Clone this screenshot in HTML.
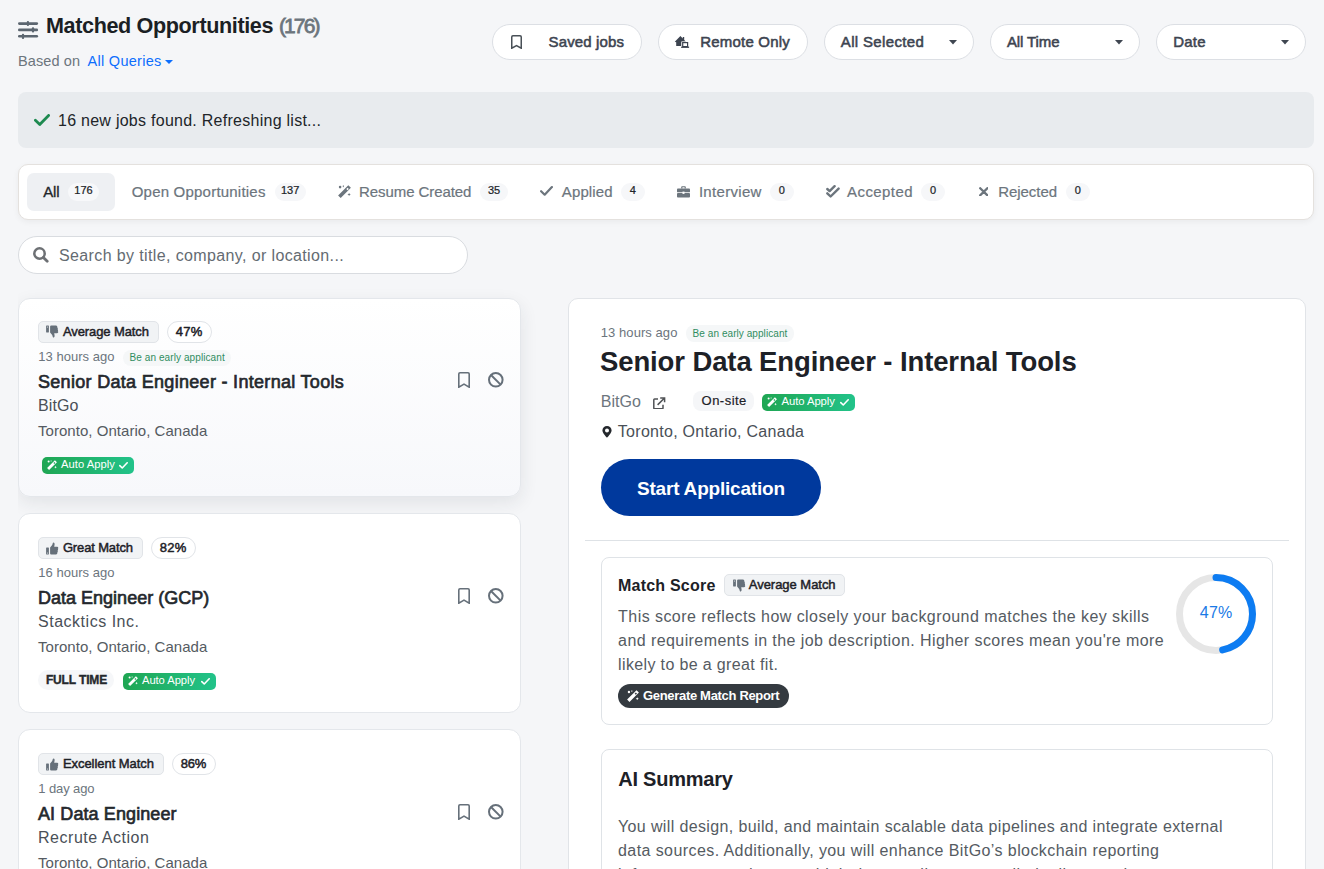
<!DOCTYPE html>
<html><head><meta charset="utf-8"><style>
html,body{margin:0;padding:0;}
body{width:1324px;height:869px;overflow:hidden;position:relative;background:#f5f6f8;font-family:"Liberation Sans", sans-serif;}
</style></head><body>
<svg style="position:absolute;left:18px;top:20px" width="21" height="20" viewBox="0 0 21 20"><g stroke="#5c6670" stroke-width="2.6" stroke-linecap="round"><line x1="1.3" y1="3.6" x2="18.8" y2="3.6"/><line x1="1.3" y1="9.9" x2="18.8" y2="9.9"/><line x1="1.3" y1="16.3" x2="18.8" y2="16.3"/></g><g fill="#5c6670"><rect x="8.8" y="0.9" width="2.2" height="5.2" rx="1"/><rect x="13.9" y="7.3" width="2.2" height="5.2" rx="1"/><rect x="3.9" y="13.7" width="2.2" height="5.2" rx="1"/></g></svg>
<div style="position:absolute;left:492px;top:24px;width:150px;height:36px;box-sizing:border-box;background:#fff;border:1px solid #dcdfe4;border-radius:18px;"></div>
<div style="position:absolute;left:658px;top:24px;width:150px;height:36px;box-sizing:border-box;background:#fff;border:1px solid #dcdfe4;border-radius:18px;"></div>
<div style="position:absolute;left:824px;top:24px;width:150px;height:36px;box-sizing:border-box;background:#fff;border:1px solid #dcdfe4;border-radius:18px;"></div>
<div style="position:absolute;left:990px;top:24px;width:150px;height:36px;box-sizing:border-box;background:#fff;border:1px solid #dcdfe4;border-radius:18px;"></div>
<div style="position:absolute;left:1156px;top:24px;width:150px;height:36px;box-sizing:border-box;background:#fff;border:1px solid #dcdfe4;border-radius:18px;"></div>
<div style="position:absolute;left:18px;top:92px;width:1296px;height:56px;box-sizing:border-box;background:#e8ebee;border-radius:8px;"></div>
<div style="position:absolute;left:18px;top:164px;width:1296px;height:56px;box-sizing:border-box;background:#fff;border:1px solid #e4e1de;border-radius:10px;box-shadow:0 2px 6px rgba(0,0,0,0.05);"></div>
<div style="position:absolute;left:27px;top:173px;width:88px;height:38px;box-sizing:border-box;background:#eef0f3;border-radius:7px;"></div>
<div style="position:absolute;left:68px;top:183px;width:31px;height:18px;box-sizing:border-box;background:#f7f8fa;border-radius:9px;"></div>
<div style="position:absolute;left:274.5px;top:183px;width:31.19999999999999px;height:18px;box-sizing:border-box;background:#f6f7f9;border-radius:9px;"></div>
<div style="position:absolute;left:480.4px;top:183px;width:27.400000000000034px;height:18px;box-sizing:border-box;background:#f6f7f9;border-radius:9px;"></div>
<div style="position:absolute;left:621px;top:183px;width:23.700000000000045px;height:18px;box-sizing:border-box;background:#f6f7f9;border-radius:9px;"></div>
<div style="position:absolute;left:769.7px;top:183px;width:24.299999999999955px;height:18px;box-sizing:border-box;background:#f6f7f9;border-radius:9px;"></div>
<div style="position:absolute;left:921px;top:183px;width:24px;height:18px;box-sizing:border-box;background:#f6f7f9;border-radius:9px;"></div>
<div style="position:absolute;left:1066px;top:183px;width:23.700000000000045px;height:18px;box-sizing:border-box;background:#f6f7f9;border-radius:9px;"></div>
<div style="position:absolute;left:18px;top:236px;width:450px;height:38px;box-sizing:border-box;background:#fff;border:1px solid #d9dce0;border-radius:19px;"></div>
<div style="position:absolute;left:18px;top:280px;width:560px;height:600px;overflow:hidden;"><div style="position:absolute;left:0;top:18px;width:503px;height:199px;border-radius:12px;box-shadow:0 6px 18px rgba(30,40,60,0.09);"></div></div>
<div style="position:absolute;left:18px;top:298px;width:503px;height:199px;box-sizing:border-box;border:1px solid #e4e7eb;border-radius:12px;background:linear-gradient(180deg,#ffffff 0%,#f7f8fb 100%);"></div>
<div style="position:absolute;left:38px;top:321px;width:121px;height:22px;box-sizing:border-box;background:#f1f3f5;border:1px solid #e1e4e8;border-radius:5px;"></div>
<div style="position:absolute;left:167px;top:321px;width:45px;height:22px;box-sizing:border-box;background:#fff;border:1px solid #e1e4e8;border-radius:11px;"></div>
<div style="position:absolute;left:123px;top:350px;width:108px;height:16px;box-sizing:border-box;background:#f5f7f8;border-radius:8px;"></div>
<div style="position:absolute;left:42px;top:457px;width:92px;height:17px;box-sizing:border-box;background:linear-gradient(90deg,#1fa653,#22c38a);border-radius:5px;"></div>
<div style="position:absolute;left:18px;top:513px;width:503px;height:200px;box-sizing:border-box;border:1px solid #e4e7eb;border-radius:12px;background:#fff;"></div>
<div style="position:absolute;left:38px;top:537px;width:105px;height:22px;box-sizing:border-box;background:#f1f3f5;border:1px solid #e1e4e8;border-radius:5px;"></div>
<div style="position:absolute;left:151px;top:537px;width:45px;height:22px;box-sizing:border-box;background:#fff;border:1px solid #e1e4e8;border-radius:11px;"></div>
<div style="position:absolute;left:38px;top:670px;width:76px;height:20px;box-sizing:border-box;background:#f6f7f9;border-radius:10px;"></div>
<div style="position:absolute;left:123px;top:673px;width:93px;height:17px;box-sizing:border-box;background:linear-gradient(90deg,#1fa653,#22c38a);border-radius:5px;"></div>
<div style="position:absolute;left:18px;top:729px;width:503px;height:211px;box-sizing:border-box;border:1px solid #e4e7eb;border-radius:12px;background:#fff;"></div>
<div style="position:absolute;left:38px;top:753px;width:126px;height:22px;box-sizing:border-box;background:#f1f3f5;border:1px solid #e1e4e8;border-radius:5px;"></div>
<div style="position:absolute;left:172px;top:753px;width:44px;height:22px;box-sizing:border-box;background:#fff;border:1px solid #e1e4e8;border-radius:11px;"></div>
<div style="position:absolute;left:568px;top:298px;width:738px;height:642px;box-sizing:border-box;background:#fff;border:1px solid #e1e4e8;border-radius:10px;"></div>
<div style="position:absolute;left:686px;top:325px;width:107.5px;height:17px;box-sizing:border-box;background:#f5f7f8;border-radius:8px;"></div>
<div style="position:absolute;left:693px;top:391px;width:61px;height:20px;box-sizing:border-box;background:#f5f6f8;border-radius:8px;"></div>
<div style="position:absolute;left:762px;top:394px;width:93px;height:17px;box-sizing:border-box;background:linear-gradient(90deg,#1fa653,#22c38a);border-radius:5px;"></div>
<div style="position:absolute;left:601px;top:459px;width:220px;height:57px;box-sizing:border-box;background:#00399d;border-radius:28.5px;"></div>
<div style="position:absolute;left:585px;top:540px;width:704px;height:1px;box-sizing:border-box;background:#dee2e6;"></div>
<div style="position:absolute;left:601px;top:557px;width:672px;height:168px;box-sizing:border-box;background:#fff;border:1px solid #dfe3e7;border-radius:8px;"></div>
<div style="position:absolute;left:724px;top:574px;width:121px;height:22px;box-sizing:border-box;background:#f1f3f5;border:1px solid #e1e4e8;border-radius:5px;"></div>
<div style="position:absolute;left:618px;top:684px;width:171px;height:24px;box-sizing:border-box;background:#343a40;border-radius:12px;"></div>
<div style="position:absolute;left:601px;top:749px;width:672px;height:211px;box-sizing:border-box;background:#fff;border:1px solid #dfe3e7;border-radius:8px;"></div>
<div style="position:absolute;left:46px;top:15.02px;font-size:21.6px;line-height:1;font-weight:700;color:#1b1f24;letter-spacing:-0.382px;white-space:nowrap;">Matched Opportunities</div>
<div style="position:absolute;left:279px;top:15.22px;font-size:21px;line-height:1;font-weight:400;color:#6c757d;letter-spacing:-1.908px;white-space:nowrap;-webkit-text-stroke:0.76px #6c757d;">(176)</div>
<div style="position:absolute;left:18px;top:53.73px;font-size:14.5px;line-height:1;font-weight:400;color:#6c757d;letter-spacing:0.103px;white-space:nowrap;">Based on</div>
<div style="position:absolute;left:87.6px;top:53.73px;font-size:14.5px;line-height:1;font-weight:400;color:#0d6efd;letter-spacing:0.278px;white-space:nowrap;">All Queries</div>
<div style="position:absolute;left:548.6px;top:34.30px;font-size:15px;line-height:1;font-weight:400;color:#3d4450;letter-spacing:0.132px;white-space:nowrap;-webkit-text-stroke:0.54px #3d4450;">Saved jobs</div>
<div style="position:absolute;left:700.3px;top:34.30px;font-size:15px;line-height:1;font-weight:400;color:#3d4450;letter-spacing:0.186px;white-space:nowrap;-webkit-text-stroke:0.54px #3d4450;">Remote Only</div>
<div style="position:absolute;left:840.8px;top:34.30px;font-size:15px;line-height:1;font-weight:400;color:#3d4450;letter-spacing:0.344px;white-space:nowrap;-webkit-text-stroke:0.54px #3d4450;">All Selected</div>
<div style="position:absolute;left:1006.9px;top:34.30px;font-size:15px;line-height:1;font-weight:400;color:#3d4450;letter-spacing:-0.091px;white-space:nowrap;-webkit-text-stroke:0.54px #3d4450;">All Time</div>
<div style="position:absolute;left:1173.2px;top:34.30px;font-size:15px;line-height:1;font-weight:400;color:#3d4450;letter-spacing:0.242px;white-space:nowrap;-webkit-text-stroke:0.54px #3d4450;">Date</div>
<div style="position:absolute;left:58px;top:113.06px;font-size:16px;line-height:1;font-weight:400;color:#212529;letter-spacing:0.264px;white-space:nowrap;">16 new jobs found. Refreshing list...</div>
<div style="position:absolute;left:43.3px;top:184.30px;font-size:15px;line-height:1;font-weight:400;color:#212529;letter-spacing:-0.184px;white-space:nowrap;-webkit-text-stroke:0.33px #212529;">All</div>
<div style="position:absolute;left:68px;top:185.29px;font-size:11px;line-height:1;font-weight:400;color:#212529;letter-spacing:0.000px;white-space:nowrap;-webkit-text-stroke:0.24px #212529;width:31px;text-align:center;">176</div>
<div style="position:absolute;left:131.7px;top:184.30px;font-size:15px;line-height:1;font-weight:400;color:#6c757d;letter-spacing:0.214px;white-space:nowrap;-webkit-text-stroke:0.21px #6c757d;">Open Opportunities</div>
<div style="position:absolute;left:274.5px;top:185.29px;font-size:11px;line-height:1;font-weight:400;color:#212529;letter-spacing:0.000px;white-space:nowrap;-webkit-text-stroke:0.24px #212529;width:31.19999999999999px;text-align:center;">137</div>
<div style="position:absolute;left:359px;top:184.30px;font-size:15px;line-height:1;font-weight:400;color:#6c757d;letter-spacing:-0.076px;white-space:nowrap;-webkit-text-stroke:0.21px #6c757d;">Resume Created</div>
<div style="position:absolute;left:480.4px;top:185.29px;font-size:11px;line-height:1;font-weight:400;color:#212529;letter-spacing:0.000px;white-space:nowrap;-webkit-text-stroke:0.24px #212529;width:27.400000000000034px;text-align:center;">35</div>
<div style="position:absolute;left:561.8px;top:184.30px;font-size:15px;line-height:1;font-weight:400;color:#6c757d;letter-spacing:0.126px;white-space:nowrap;-webkit-text-stroke:0.21px #6c757d;">Applied</div>
<div style="position:absolute;left:621px;top:185.29px;font-size:11px;line-height:1;font-weight:400;color:#212529;letter-spacing:0.000px;white-space:nowrap;-webkit-text-stroke:0.24px #212529;width:23.700000000000045px;text-align:center;">4</div>
<div style="position:absolute;left:698.9px;top:184.30px;font-size:15px;line-height:1;font-weight:400;color:#6c757d;letter-spacing:0.310px;white-space:nowrap;-webkit-text-stroke:0.21px #6c757d;">Interview</div>
<div style="position:absolute;left:769.7px;top:185.29px;font-size:11px;line-height:1;font-weight:400;color:#212529;letter-spacing:0.000px;white-space:nowrap;-webkit-text-stroke:0.24px #212529;width:24.299999999999955px;text-align:center;">0</div>
<div style="position:absolute;left:847px;top:184.30px;font-size:15px;line-height:1;font-weight:400;color:#6c757d;letter-spacing:0.436px;white-space:nowrap;-webkit-text-stroke:0.21px #6c757d;">Accepted</div>
<div style="position:absolute;left:921px;top:185.29px;font-size:11px;line-height:1;font-weight:400;color:#212529;letter-spacing:0.000px;white-space:nowrap;-webkit-text-stroke:0.24px #212529;width:24px;text-align:center;">0</div>
<div style="position:absolute;left:998.3px;top:184.30px;font-size:15px;line-height:1;font-weight:400;color:#6c757d;letter-spacing:-0.071px;white-space:nowrap;-webkit-text-stroke:0.21px #6c757d;">Rejected</div>
<div style="position:absolute;left:1066px;top:185.29px;font-size:11px;line-height:1;font-weight:400;color:#212529;letter-spacing:0.000px;white-space:nowrap;-webkit-text-stroke:0.24px #212529;width:23.700000000000045px;text-align:center;">0</div>
<div style="position:absolute;left:59px;top:247.66px;font-size:16px;line-height:1;font-weight:400;color:#646b72;letter-spacing:0.375px;white-space:nowrap;">Search by title, company, or location...</div>
<div style="position:absolute;left:62.9px;top:325.00px;font-size:13px;line-height:1;font-weight:400;color:#1d2127;letter-spacing:-0.091px;white-space:nowrap;-webkit-text-stroke:0.47px #1d2127;">Average Match</div>
<div style="position:absolute;left:175.8px;top:325.00px;font-size:13px;line-height:1;font-weight:400;color:#1d2127;letter-spacing:0.236px;white-space:nowrap;-webkit-text-stroke:0.47px #1d2127;">47%</div>
<div style="position:absolute;left:38.3px;top:350.00px;font-size:13px;line-height:1;font-weight:400;color:#6c757d;letter-spacing:0.018px;white-space:nowrap;">13 hours ago</div>
<div style="position:absolute;left:129.5px;top:352.54px;font-size:10px;line-height:1;font-weight:400;color:#2f8d60;letter-spacing:0.090px;white-space:nowrap;">Be an early applicant</div>
<div style="position:absolute;left:38px;top:373.26px;font-size:18px;line-height:1;font-weight:400;color:#24282d;letter-spacing:0.304px;white-space:nowrap;-webkit-text-stroke:0.65px #24282d;">Senior Data Engineer - Internal Tools</div>
<div style="position:absolute;left:38px;top:397.96px;font-size:16px;line-height:1;font-weight:400;color:#4a5057;letter-spacing:0.096px;white-space:nowrap;">BitGo</div>
<div style="position:absolute;left:38px;top:423.30px;font-size:15px;line-height:1;font-weight:400;color:#555b62;letter-spacing:0.038px;white-space:nowrap;">Toronto, Ontario, Canada</div>
<div style="position:absolute;left:61px;top:459.05px;font-size:11.2px;line-height:1;font-weight:400;color:#ffffff;letter-spacing:0.033px;white-space:nowrap;">Auto Apply</div>
<div style="position:absolute;left:62.9px;top:541.00px;font-size:13px;line-height:1;font-weight:400;color:#1d2127;letter-spacing:-0.142px;white-space:nowrap;-webkit-text-stroke:0.47px #1d2127;">Great Match</div>
<div style="position:absolute;left:159.8px;top:541.00px;font-size:13px;line-height:1;font-weight:400;color:#1d2127;letter-spacing:0.236px;white-space:nowrap;-webkit-text-stroke:0.47px #1d2127;">82%</div>
<div style="position:absolute;left:38.3px;top:566.00px;font-size:13px;line-height:1;font-weight:400;color:#6c757d;letter-spacing:0.018px;white-space:nowrap;">16 hours ago</div>
<div style="position:absolute;left:38px;top:589.26px;font-size:18px;line-height:1;font-weight:400;color:#24282d;letter-spacing:0.007px;white-space:nowrap;-webkit-text-stroke:0.65px #24282d;">Data Engineer (GCP)</div>
<div style="position:absolute;left:38px;top:613.96px;font-size:16px;line-height:1;font-weight:400;color:#4a5057;letter-spacing:0.519px;white-space:nowrap;">Stacktics Inc.</div>
<div style="position:absolute;left:38px;top:639.30px;font-size:15px;line-height:1;font-weight:400;color:#555b62;letter-spacing:0.038px;white-space:nowrap;">Toronto, Ontario, Canada</div>
<div style="position:absolute;left:45.9px;top:674.14px;font-size:12px;line-height:1;font-weight:700;color:#24282d;letter-spacing:-0.141px;white-space:nowrap;-webkit-text-stroke:0.36px #24282d;">FULL TIME</div>
<div style="position:absolute;left:142px;top:675.05px;font-size:11.2px;line-height:1;font-weight:400;color:#ffffff;letter-spacing:-0.056px;white-space:nowrap;">Auto Apply</div>
<div style="position:absolute;left:62.9px;top:757.00px;font-size:13px;line-height:1;font-weight:400;color:#1d2127;letter-spacing:-0.047px;white-space:nowrap;-webkit-text-stroke:0.47px #1d2127;">Excellent Match</div>
<div style="position:absolute;left:180.8px;top:757.00px;font-size:13px;line-height:1;font-weight:400;color:#1d2127;letter-spacing:-0.264px;white-space:nowrap;-webkit-text-stroke:0.47px #1d2127;">86%</div>
<div style="position:absolute;left:38.3px;top:782.00px;font-size:13px;line-height:1;font-weight:400;color:#6c757d;letter-spacing:-0.101px;white-space:nowrap;">1 day ago</div>
<div style="position:absolute;left:38px;top:805.26px;font-size:18px;line-height:1;font-weight:400;color:#24282d;letter-spacing:0.100px;white-space:nowrap;-webkit-text-stroke:0.65px #24282d;">AI Data Engineer</div>
<div style="position:absolute;left:38px;top:829.96px;font-size:16px;line-height:1;font-weight:400;color:#4a5057;letter-spacing:0.526px;white-space:nowrap;">Recrute Action</div>
<div style="position:absolute;left:38px;top:855.30px;font-size:15px;line-height:1;font-weight:400;color:#555b62;letter-spacing:0.038px;white-space:nowrap;">Toronto, Ontario, Canada</div>
<div style="position:absolute;left:600.8px;top:326.10px;font-size:13px;line-height:1;font-weight:400;color:#6c757d;letter-spacing:0.063px;white-space:nowrap;">13 hours ago</div>
<div style="position:absolute;left:692.6px;top:328.94px;font-size:10px;line-height:1;font-weight:400;color:#2f8d60;letter-spacing:0.065px;white-space:nowrap;">Be an early applicant</div>
<div style="position:absolute;left:600px;top:348.42px;font-size:27.5px;line-height:1;font-weight:700;color:#1d2127;letter-spacing:-0.115px;white-space:nowrap;">Senior Data Engineer - Internal Tools</div>
<div style="position:absolute;left:600.8px;top:394.16px;font-size:16px;line-height:1;font-weight:400;color:#6c757d;letter-spacing:0.022px;white-space:nowrap;">BitGo</div>
<div style="position:absolute;left:701.6px;top:394.10px;font-size:13px;line-height:1;font-weight:400;color:#1d2127;letter-spacing:0.467px;white-space:nowrap;-webkit-text-stroke:0.18px #1d2127;">On-site</div>
<div style="position:absolute;left:781.6px;top:396.00px;font-size:11.3px;line-height:1;font-weight:400;color:#ffffff;letter-spacing:-0.079px;white-space:nowrap;">Auto Apply</div>
<div style="position:absolute;left:617.8px;top:424.26px;font-size:16px;line-height:1;font-weight:400;color:#4a5057;letter-spacing:0.284px;white-space:nowrap;">Toronto, Ontario, Canada</div>
<div style="position:absolute;left:637px;top:479.22px;font-size:19px;line-height:1;font-weight:700;color:#ffffff;letter-spacing:-0.207px;white-space:nowrap;">Start Application</div>
<div style="position:absolute;left:618px;top:577.96px;font-size:16px;line-height:1;font-weight:700;color:#1d2127;letter-spacing:0.216px;white-space:nowrap;">Match Score</div>
<div style="position:absolute;left:748.8px;top:578.00px;font-size:13px;line-height:1;font-weight:400;color:#1d2127;letter-spacing:-0.033px;white-space:nowrap;-webkit-text-stroke:0.47px #1d2127;">Average Match</div>
<div style="position:absolute;left:618.1px;top:609.16px;font-size:16px;line-height:1;font-weight:400;color:#555b62;letter-spacing:0.438px;white-space:nowrap;">This score reflects how closely your background matches the key skills</div>
<div style="position:absolute;left:618.1px;top:632.96px;font-size:16px;line-height:1;font-weight:400;color:#555b62;letter-spacing:0.421px;white-space:nowrap;">and requirements in the job description. Higher scores mean you&#39;re more</div>
<div style="position:absolute;left:618.1px;top:656.76px;font-size:16px;line-height:1;font-weight:400;color:#555b62;letter-spacing:0.359px;white-space:nowrap;">likely to be a great fit.</div>
<div style="position:absolute;left:643px;top:689.40px;font-size:13px;line-height:1;font-weight:700;color:#ffffff;letter-spacing:-0.317px;white-space:nowrap;">Generate Match Report</div>
<div style="position:absolute;left:1199.7px;top:604.66px;font-size:16px;line-height:1;font-weight:400;color:#1a7ae6;letter-spacing:0.291px;white-space:nowrap;">47%</div>
<div style="position:absolute;left:618.3px;top:769.07px;font-size:20px;line-height:1;font-weight:700;color:#1d2127;letter-spacing:-0.246px;white-space:nowrap;">AI Summary</div>
<div style="position:absolute;left:618px;top:819.26px;font-size:16px;line-height:1;font-weight:400;color:#555b62;letter-spacing:0.371px;white-space:nowrap;">You will design, build, and maintain scalable data pipelines and integrate external</div>
<div style="position:absolute;left:618px;top:843.06px;font-size:16px;line-height:1;font-weight:400;color:#555b62;letter-spacing:0.419px;white-space:nowrap;">data sources. Additionally, you will enhance BitGo&#8217;s blockchain reporting</div>
<div style="position:absolute;left:618px;top:867.06px;font-size:16px;line-height:1;font-weight:400;color:#555b62;letter-spacing:0.590px;white-space:nowrap;">infrastructure and ensure high data quality across all pipelines and systems.</div>
<svg style="position:absolute;left:165px;top:59.5px;" width="8" height="4" viewBox="0 0 8 4"><path d="M0 0 H8 L4.0 4 Z" fill="#0d6efd"/></svg>
<svg style="position:absolute;left:511px;top:35px;" width="11" height="14" viewBox="0 0 11 14"><path d="M0.75 13.25 V1.95 Q0.75 0.75 1.95 0.75 H9.05 Q10.25 0.75 10.25 1.95 V13.25 L5.5 10.64 Z" fill="none" stroke="#495057" stroke-width="1.5" stroke-linejoin="miter"/></svg>
<svg style="position:absolute;left:674px;top:35px;" width="16" height="14" viewBox="0 0 16 14"><path d="M0.8 6.8 L6.4 1.1 L8.8 3.5 V2.0 H10.2 V4.9 L11.8 6.5 L11.1 7.2 H7.6 V10.9 H2.2 V7.2 Z" fill="#3d4450"/><rect x="7.4" y="6.4" width="7.4" height="6.0" fill="#fff"/><rect x="8.7" y="7.6" width="4.9" height="4.0" fill="none" stroke="#3d4450" stroke-width="1.2"/><rect x="7.1" y="11.6" width="8" height="1.3" fill="#3d4450"/></svg>
<svg style="position:absolute;left:949px;top:40px;" width="8" height="4.5" viewBox="0 0 8 4.5"><path d="M0 0 H8 L4.0 4.5 Z" fill="#3f4651"/></svg>
<svg style="position:absolute;left:1115px;top:40px;" width="8" height="4.5" viewBox="0 0 8 4.5"><path d="M0 0 H8 L4.0 4.5 Z" fill="#3f4651"/></svg>
<svg style="position:absolute;left:1281px;top:40px;" width="8" height="4.5" viewBox="0 0 8 4.5"><path d="M0 0 H8 L4.0 4.5 Z" fill="#3f4651"/></svg>
<svg style="position:absolute;left:34px;top:114px;" width="16" height="12" viewBox="0 0 16 12"><path d="M1.4 6.24 L5.76 10.4 L14.6 1.4" fill="none" stroke="#1e8a50" stroke-width="2.8" stroke-linecap="round" stroke-linejoin="round"/></svg>
<svg style="position:absolute;left:338px;top:185px;" width="13" height="13" viewBox="0 0 13 13"><g transform="scale(1.0000)" fill="#6c757d"><path fill-rule="evenodd" d="M0.1 10.4 L10.3 0.2 L12.9 2.8 L2.7 13.0 Z M8.3 4.0 L9.6 2.7 L10.8 3.9 L9.5 5.2 Z"/><circle cx="2.1" cy="2.1" r="1.3"/><ellipse cx="5.3" cy="1.2" rx="0.55" ry="0.95"/><path d="M11.1 7.9 L11.7 8.9 L12.8 9.4 L11.7 9.9 L11.1 10.9 L10.5 9.9 L9.4 9.4 L10.5 8.9 Z"/></g></svg>
<svg style="position:absolute;left:540px;top:186px;" width="13" height="10" viewBox="0 0 13 10"><path d="M1.1 5.2 L4.68 8.700000000000001 L11.9 1.1" fill="none" stroke="#6c757d" stroke-width="2.2" stroke-linecap="round" stroke-linejoin="round"/></svg>
<svg style="position:absolute;left:677px;top:186px;" width="13" height="11.5" viewBox="0 0 13 11.5"><path d="M4.2 2.4 V1.1 Q4.2 0.2 5.1 0.2 H7.9 Q8.8 0.2 8.8 1.1 V2.4 H7.6 V1.3 H5.4 V2.4 Z" fill="#6c757d"/><rect x="0" y="2.4" width="13" height="3.9" rx="0.9" fill="#6c757d"/><rect x="0" y="7.1" width="13" height="4.4" rx="0.9" fill="#6c757d"/><rect x="5.5" y="5.6" width="2" height="2.3" fill="#fff"/></svg>
<svg style="position:absolute;left:825.5px;top:185px;" width="14" height="13" viewBox="0 0 14 13"><path d="M1.3 4.0 L3.6 6.1 L8.6 1.2" fill="none" stroke="#6c757d" stroke-width="2.4" stroke-linecap="round" stroke-linejoin="round"/><path d="M1.3 8.3 L4.6 11.5 L12.6 3.6" fill="none" stroke="#6c757d" stroke-width="2.4" stroke-linecap="round" stroke-linejoin="round"/></svg>
<svg style="position:absolute;left:978.8px;top:186.8px;" width="9.5" height="9.5" viewBox="0 0 9.5 9.5"><path d="M1.2 1.2 L8.3 8.3 M8.3 1.2 L1.2 8.3" stroke="#6c757d" stroke-width="2.3" stroke-linecap="round"/></svg>
<svg style="position:absolute;left:33px;top:246.8px;" width="16" height="16" viewBox="0 0 16 16"><circle cx="6.5" cy="6.5" r="5.2" fill="none" stroke="#6d7074" stroke-width="2.5"/><line x1="10.4" y1="10.4" x2="14.2" y2="14.2" stroke="#6d7074" stroke-width="2.8" stroke-linecap="round"/></svg>
<svg style="position:absolute;left:46px;top:325.0px;" width="13" height="13" viewBox="0 0 13 13"><g transform="translate(0,13) scale(1,-1)"><rect x="0.1" y="5.5" width="2.8" height="6.9" rx="0.4" fill="#66707a"/><circle cx="1.5" cy="11.0" r="0.5" fill="#f1f3f5"/><path d="M4.1 5.4 L6.0 3.3 Q6.6 2.3 6.8 1.1 Q7.1 0.3 7.8 0.4 Q8.8 0.8 8.6 2.4 L8.2 4.8 H11.1 Q12.3 4.8 12.3 5.9 Q12.3 6.5 11.8 6.8 Q12.3 7.3 12.0 8.1 Q11.9 8.5 11.6 8.7 Q12.0 9.3 11.7 10.0 Q11.5 10.3 11.3 10.4 Q11.5 11.2 11.1 11.8 Q10.8 12.4 10.0 12.4 H5.2 Q4.1 12.4 4.1 11.4 Z" fill="#66707a"/></g></svg>
<svg style="position:absolute;left:47px;top:459.7px;" width="10" height="10" viewBox="0 0 10 10"><g transform="scale(0.7692)" fill="#fff"><path fill-rule="evenodd" d="M0.1 10.4 L10.3 0.2 L12.9 2.8 L2.7 13.0 Z M8.3 4.0 L9.6 2.7 L10.8 3.9 L9.5 5.2 Z"/><circle cx="2.1" cy="2.1" r="1.3"/><ellipse cx="5.3" cy="1.2" rx="0.55" ry="0.95"/><path d="M11.1 7.9 L11.7 8.9 L12.8 9.4 L11.7 9.9 L11.1 10.9 L10.5 9.9 L9.4 9.4 L10.5 8.9 Z"/></g></svg>
<svg style="position:absolute;left:119px;top:462.0px;" width="9" height="7" viewBox="0 0 9 7"><path d="M0.8 3.64 L3.2399999999999998 6.0 L8.2 0.8" fill="none" stroke="#fff" stroke-width="1.6" stroke-linecap="round" stroke-linejoin="round"/></svg>
<svg style="position:absolute;left:458px;top:372px;" width="12" height="16" viewBox="0 0 12 16"><path d="M0.8 15.2 V2.0 Q0.8 0.8 2.0 0.8 H10.0 Q11.2 0.8 11.2 2.0 V15.2 L6.0 12.16 Z" fill="none" stroke="#66707a" stroke-width="1.6" stroke-linejoin="miter"/></svg>
<svg style="position:absolute;left:488.2px;top:372.2px;" width="15.6" height="15.6" viewBox="0 0 15.6 15.6"><circle cx="7.8" cy="7.8" r="6.8" fill="none" stroke="#66707a" stroke-width="2.0"/><line x1="2.99172" y1="2.99172" x2="12.60828" y2="12.60828" stroke="#66707a" stroke-width="2.0"/></svg>
<svg style="position:absolute;left:46px;top:541.5px;" width="13" height="13" viewBox="0 0 13 13"><g><rect x="0.1" y="5.5" width="2.8" height="6.9" rx="0.4" fill="#66707a"/><circle cx="1.5" cy="11.0" r="0.5" fill="#f1f3f5"/><path d="M4.1 5.4 L6.0 3.3 Q6.6 2.3 6.8 1.1 Q7.1 0.3 7.8 0.4 Q8.8 0.8 8.6 2.4 L8.2 4.8 H11.1 Q12.3 4.8 12.3 5.9 Q12.3 6.5 11.8 6.8 Q12.3 7.3 12.0 8.1 Q11.9 8.5 11.6 8.7 Q12.0 9.3 11.7 10.0 Q11.5 10.3 11.3 10.4 Q11.5 11.2 11.1 11.8 Q10.8 12.4 10.0 12.4 H5.2 Q4.1 12.4 4.1 11.4 Z" fill="#66707a"/></g></svg>
<svg style="position:absolute;left:128px;top:675.7px;" width="10" height="10" viewBox="0 0 10 10"><g transform="scale(0.7692)" fill="#fff"><path fill-rule="evenodd" d="M0.1 10.4 L10.3 0.2 L12.9 2.8 L2.7 13.0 Z M8.3 4.0 L9.6 2.7 L10.8 3.9 L9.5 5.2 Z"/><circle cx="2.1" cy="2.1" r="1.3"/><ellipse cx="5.3" cy="1.2" rx="0.55" ry="0.95"/><path d="M11.1 7.9 L11.7 8.9 L12.8 9.4 L11.7 9.9 L11.1 10.9 L10.5 9.9 L9.4 9.4 L10.5 8.9 Z"/></g></svg>
<svg style="position:absolute;left:201px;top:678.0px;" width="9" height="7" viewBox="0 0 9 7"><path d="M0.8 3.64 L3.2399999999999998 6.0 L8.2 0.8" fill="none" stroke="#fff" stroke-width="1.6" stroke-linecap="round" stroke-linejoin="round"/></svg>
<svg style="position:absolute;left:458px;top:588px;" width="12" height="16" viewBox="0 0 12 16"><path d="M0.8 15.2 V2.0 Q0.8 0.8 2.0 0.8 H10.0 Q11.2 0.8 11.2 2.0 V15.2 L6.0 12.16 Z" fill="none" stroke="#66707a" stroke-width="1.6" stroke-linejoin="miter"/></svg>
<svg style="position:absolute;left:488.2px;top:588.2px;" width="15.6" height="15.6" viewBox="0 0 15.6 15.6"><circle cx="7.8" cy="7.8" r="6.8" fill="none" stroke="#66707a" stroke-width="2.0"/><line x1="2.99172" y1="2.99172" x2="12.60828" y2="12.60828" stroke="#66707a" stroke-width="2.0"/></svg>
<svg style="position:absolute;left:46px;top:757.5px;" width="13" height="13" viewBox="0 0 13 13"><g><rect x="0.1" y="5.5" width="2.8" height="6.9" rx="0.4" fill="#66707a"/><circle cx="1.5" cy="11.0" r="0.5" fill="#f1f3f5"/><path d="M4.1 5.4 L6.0 3.3 Q6.6 2.3 6.8 1.1 Q7.1 0.3 7.8 0.4 Q8.8 0.8 8.6 2.4 L8.2 4.8 H11.1 Q12.3 4.8 12.3 5.9 Q12.3 6.5 11.8 6.8 Q12.3 7.3 12.0 8.1 Q11.9 8.5 11.6 8.7 Q12.0 9.3 11.7 10.0 Q11.5 10.3 11.3 10.4 Q11.5 11.2 11.1 11.8 Q10.8 12.4 10.0 12.4 H5.2 Q4.1 12.4 4.1 11.4 Z" fill="#66707a"/></g></svg>
<svg style="position:absolute;left:458px;top:804px;" width="12" height="16" viewBox="0 0 12 16"><path d="M0.8 15.2 V2.0 Q0.8 0.8 2.0 0.8 H10.0 Q11.2 0.8 11.2 2.0 V15.2 L6.0 12.16 Z" fill="none" stroke="#66707a" stroke-width="1.6" stroke-linejoin="miter"/></svg>
<svg style="position:absolute;left:488.2px;top:804.2px;" width="15.6" height="15.6" viewBox="0 0 15.6 15.6"><circle cx="7.8" cy="7.8" r="6.8" fill="none" stroke="#66707a" stroke-width="2.0"/><line x1="2.99172" y1="2.99172" x2="12.60828" y2="12.60828" stroke="#66707a" stroke-width="2.0"/></svg>
<svg style="position:absolute;left:653px;top:396.5px;" width="13" height="12.5" viewBox="0 0 13 12.5"><path d="M5.0 1.9 H1.6 Q0.8 1.9 0.8 2.7 V10.9 Q0.8 11.7 1.6 11.7 H9.2 Q10.0 11.7 10.0 10.9 V7.7" fill="none" stroke="#505356" stroke-width="1.5"/><path d="M7.2 0.9 H11.6 V5.3 M11.3 1.2 L4.6 7.9" fill="none" stroke="#505356" stroke-width="1.5"/></svg>
<svg style="position:absolute;left:767px;top:396.7px;" width="10" height="10" viewBox="0 0 10 10"><g transform="scale(0.7692)" fill="#fff"><path fill-rule="evenodd" d="M0.1 10.4 L10.3 0.2 L12.9 2.8 L2.7 13.0 Z M8.3 4.0 L9.6 2.7 L10.8 3.9 L9.5 5.2 Z"/><circle cx="2.1" cy="2.1" r="1.3"/><ellipse cx="5.3" cy="1.2" rx="0.55" ry="0.95"/><path d="M11.1 7.9 L11.7 8.9 L12.8 9.4 L11.7 9.9 L11.1 10.9 L10.5 9.9 L9.4 9.4 L10.5 8.9 Z"/></g></svg>
<svg style="position:absolute;left:840px;top:399.0px;" width="9" height="7" viewBox="0 0 9 7"><path d="M0.8 3.64 L3.2399999999999998 6.0 L8.2 0.8" fill="none" stroke="#fff" stroke-width="1.6" stroke-linecap="round" stroke-linejoin="round"/></svg>
<svg style="position:absolute;left:602.4px;top:425.5px;" width="10" height="12" viewBox="0 0 10 12"><path d="M5 11.8 C5 11.8 9.6 7.3 9.6 4.6 A4.6 4.6 0 0 0 0.4 4.6 C0.4 7.3 5 11.8 5 11.8 Z M5 6.6 A2 2 0 1 1 5 2.6 A2 2 0 0 1 5 6.6 Z" fill="#24282d" fill-rule="evenodd"/></svg>
<svg style="position:absolute;left:733px;top:578.5px;" width="13" height="13" viewBox="0 0 13 13"><g transform="translate(0,13) scale(1,-1)"><rect x="0.1" y="5.5" width="2.8" height="6.9" rx="0.4" fill="#66707a"/><circle cx="1.5" cy="11.0" r="0.5" fill="#f1f3f5"/><path d="M4.1 5.4 L6.0 3.3 Q6.6 2.3 6.8 1.1 Q7.1 0.3 7.8 0.4 Q8.8 0.8 8.6 2.4 L8.2 4.8 H11.1 Q12.3 4.8 12.3 5.9 Q12.3 6.5 11.8 6.8 Q12.3 7.3 12.0 8.1 Q11.9 8.5 11.6 8.7 Q12.0 9.3 11.7 10.0 Q11.5 10.3 11.3 10.4 Q11.5 11.2 11.1 11.8 Q10.8 12.4 10.0 12.4 H5.2 Q4.1 12.4 4.1 11.4 Z" fill="#66707a"/></g></svg>
<svg style="position:absolute;left:627px;top:690px;" width="12" height="12" viewBox="0 0 12 12"><g transform="scale(0.9231)" fill="#fff"><path fill-rule="evenodd" d="M0.1 10.4 L10.3 0.2 L12.9 2.8 L2.7 13.0 Z M8.3 4.0 L9.6 2.7 L10.8 3.9 L9.5 5.2 Z"/><circle cx="2.1" cy="2.1" r="1.3"/><ellipse cx="5.3" cy="1.2" rx="0.55" ry="0.95"/><path d="M11.1 7.9 L11.7 8.9 L12.8 9.4 L11.7 9.9 L11.1 10.9 L10.5 9.9 L9.4 9.4 L10.5 8.9 Z"/></g></svg>
<svg style="position:absolute;left:1176px;top:574px;" width="80" height="80" viewBox="0 0 80 80"><circle cx="40" cy="40" r="36.5" fill="none" stroke="#e6e6e6" stroke-width="7"/><circle cx="40" cy="40" r="36.5" fill="none" stroke="#0d7cf2" stroke-width="7" stroke-linecap="round" stroke-dasharray="107.79 229.34" transform="rotate(-90 40 40)"/></svg>
</body></html>
